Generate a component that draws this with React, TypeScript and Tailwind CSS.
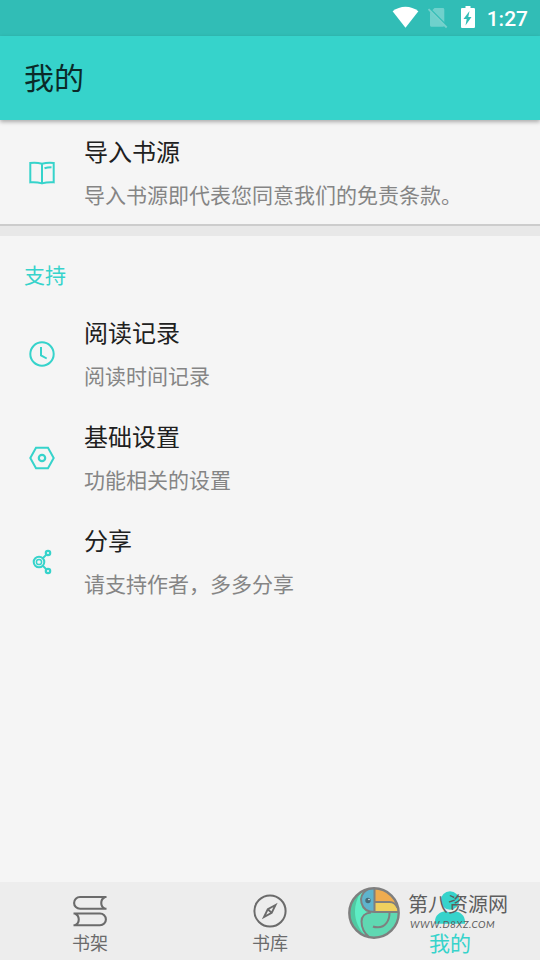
import type { ReactNode } from "react";
import clsx from "clsx";

const BookIcon = () => (
  <svg className="w-9 h-9" viewBox="0 0 36 36" fill="none" stroke="#36d3cb" strokeWidth="2">
    <path d="M18 9.8C14 8.7 10 8.6 6.3 9v19.3c4-.3 8 0 11.7 1.1 3.700-1.100 7.700-1.400 11.700-1.100V9C26 8.600 22 8.700 18 9.800zM18 9.800v19.600" />
    <path d="M20.500 14.200c2-.7 4.500-1 7-1" />
  </svg>
);

const ClockIcon = () => (
  <svg className="w-9 h-9" viewBox="0 0 36 36" fill="none" stroke="#36d3cb" strokeWidth="2">
    <circle cx="18" cy="18" r="11.7" />
    <path d="M17 11v8.300l5.700 3.200" />
  </svg>
);

const SettingIcon = () => (
  <svg className="w-9 h-9" viewBox="0 0 36 36" fill="none" stroke="#36d3cb" strokeWidth="2">
    <path d="M12 7.800h12L29.700 18 24 28.200H12L6.300 18z" />
    <circle cx="18" cy="18" r="3.200" strokeWidth="2.200" />
  </svg>
);

const ShareIcon = () => (
  <svg className="w-9 h-9" viewBox="0 0 36 36" fill="none" stroke="#36d3cb" strokeWidth="2">
    <circle cx="15" cy="18" r="5.300" />
    <circle cx="15" cy="18" r="2.600" strokeWidth="1.500" />
    <circle cx="24" cy="9" r="2.200" strokeWidth="2.200" />
    <circle cx="24" cy="27" r="2.200" strokeWidth="2.200" />
    <path d="M18.800 14.200l3.600-3.600M18.800 21.800l3.600 3.600" />
  </svg>
);

const ShelfIcon = () => (
  <svg className="w-9 h-9" viewBox="0 0 36 36" fill="none" stroke="#6b6b6b" strokeWidth="2.100">
    <path d="M34.500 4H8a5.900 5.900 0 0 0 0 11.800h26.500M33 4c-5 2.500-5 9.300 0 11.800" />
    <path d="M1.500 20.500H28a5.900 5.900 0 0 1 0 11.800H1.500M3 20.500c5 2.500 5 9.300 0 11.800" />
  </svg>
);

const CompassIcon = () => (
  <svg className="w-9 h-9" viewBox="0 0 36 36" fill="none" stroke="#6b6b6b" strokeWidth="2">
    <circle cx="18" cy="18" r="15.600" />
    <path d="M23.500 12l-7.700 4.200-3.800 7.900 7.700-4.200zM15.800 16.200l3.900 3.700" strokeWidth="1.900" />
  </svg>
);

const UserIcon = () => (
  <svg className="w-9 h-9" viewBox="0 0 36 36" fill="#36d3cb">
    <circle cx="18" cy="9.500" r="9.300" />
    <path d="M3 32.800v-2.300C3 24.500 7.500 21 13 20.200a12 12 0 0 0 10 0c5.500.8 10 4.300 10 10.300v2.300z" />
  </svg>
);

const BirdLogo = () => (
  <svg className="w-[52px] h-[52px]" viewBox="0 0 52 52" fill="none" stroke="#7f7f7f" strokeWidth="2">
    <circle cx="26" cy="26" r="25" fill="#5fd8b2" stroke="none" />
    <path d="M17 3C3 9-1 24 4 36c3 8 10 12 18 14-5-4-9-9-9-15 0-5 3-8 6-9-6-6-7-16-2-23z" fill="#5eecc4" stroke="none" />
    <path d="M13 5C2 12-1 25 4 36c3 7 8 11 14 13C6 39 3 20 13 5z" fill="#50c9a2" stroke="none" />
    <path d="M26.500 1.500c11 0 20 7 23 19-3-4-5-5.500-8-5.500h-15z" fill="#efac50" stroke="none" />
    <path d="M26.500 15h15c5 0 8 4 9 10h-24z" fill="#efd05f" stroke="none" />
    <path d="M20 2c-6 4-8 9-6.500 14 1.500 6 6 9 13 9V1.500z" fill="#5eb4cd" stroke="none" />
    <path d="M20 2c-6 4-8 9-6.500 14 1.500 6 6 9 13 9h24M26.500 1.500V25M26.500 15h15c4 0 6.500 2 8 6" />
    <path d="M23 25.500c-6 .5-9.500 4-9.500 9 0 6 3 12 8 16M41.500 26c0 8-4.500 14.300-11.500 14.300-2 0-3.500 0-5-.8" />
    <circle cx="20" cy="13.500" r="2.700" fill="#476b78" stroke="none" />
    <circle cx="21" cy="12.500" r=".8" fill="#dfeef2" stroke="none" />
    <circle cx="26" cy="26" r="24.700" strokeWidth="2.400" />
  </svg>
);

const StatusBar = () => (
  <div className="h-9 bg-[#31bdb6] flex items-center justify-end pr-3">
    <svg className="w-[84px] h-9" viewBox="392 0 84 36" fill="#fff">
      <path d="M405.500 27.800L392.600 11.300c7.500-6 18.300-6 25.800 0z" />
      <path d="M434.500 8h8.300c.9 0 1.500.6 1.500 1.500v15.700c0 .9-.6 1.500-1.500 1.500H431.500c-.9 0-1.500-.6-1.500-1.500V12.500z" opacity=".3" />
      <path d="M429.500 8.200l18.200 18.300" stroke="#31bdb6" strokeWidth="1.500" />
      <path d="M428.500 9.200l18.200 18.300" stroke="#77d1cc" strokeWidth="1.800" />
      <path d="M465.500 6h5v2h3.200c.7 0 1.300.5 1.300 1.200v17.500c0 .7-.6 1.300-1.300 1.300h-11.400c-.7 0-1.300-.6-1.300-1.300V9.200c0-.7.600-1.200 1.300-1.200h3.200z" />
      <path d="M469.500 11l-6 8h3.200l-1.200 6.500 6-8.500h-3.200z" fill="#31bdb6" />
    </svg>
    <span className="ml-[11px] pt-0.5 font-[Roboto] font-medium text-[21px] leading-9 text-white">1:27</span>
  </div>
);

interface ItemProps {
  icon: ReactNode;
  title: string;
  summary: string;
  className?: string;
}

const Item = ({ icon, title, summary, className }: ItemProps) => (
  <div className="h-[104px] px-6 flex items-center gap-6">
    {icon}
    <div className={clsx("h-full", className ?? "pt-3")}>
      <p className="text-2xl leading-9 text-[#202020]">{title}</p>
      <p className="mt-2.5 text-[21px] leading-[30px] text-[#858585]">{summary}</p>
    </div>
  </div>
);

const records: ItemProps[] = [
  { icon: <ClockIcon />, title: "阅读记录", summary: "阅读时间记录" },
  { icon: <SettingIcon />, title: "基础设置", summary: "功能相关的设置" },
  { icon: <ShareIcon />, title: "分享", summary: "请支持作者，多多分享" },
];

const App = () => {
  return (
    <div className="relative w-[540px] h-[960px] flex flex-col overflow-hidden bg-[#f5f5f5] font-['Noto_Sans_CJK_SC',sans-serif]">
      <StatusBar />
      <header className="relative h-[84px] px-6 bg-[#36d3cb] shadow-[0_2px_4px_rgba(0,0,0,0.3)]">
        <h1 className="text-[30px] leading-[80px] text-[#0b2a29]">我的</h1>
      </header>

      <main className="flex-1">
        <Item
          icon={<BookIcon />}
          title="导入书源"
          summary="导入书源即代表您同意我们的免责条款。"
          className="pt-[13px]"
        />
        <div className="h-3 bg-[#e8e8e8] border-t-2 border-[#cccccc]"></div>
        <h2 className="h-[66px] pt-[23px] px-6 text-[21px] leading-[30px] text-[#36d3cb]">支持</h2>
        {records.map((item) => (
          <Item key={item.title} {...item} />
        ))}
      </main>

      <nav className="h-[78px] grid grid-cols-3 bg-[#ededed] text-lg leading-6 text-[#6b6b6b]">
        <div className="flex flex-col items-center pt-[11px]">
          <ShelfIcon />
          <span className="mt-px">书架</span>
        </div>
        <div className="flex flex-col items-center pt-[11px]">
          <CompassIcon />
          <span className="mt-px">书库</span>
        </div>
        <div className="flex flex-col items-center pt-[9px] text-[#36d3cb]">
          <UserIcon />
          <span className="mt-[3px] text-[21px] leading-6">我的</span>
        </div>
      </nav>

      <div className="absolute left-[348px] top-[887px] flex gap-2">
        <BirdLogo />
        <div className="pt-[5px] whitespace-nowrap text-[#5e5e5e]">
          <p className="text-xl leading-6">第八资源网</p>
          <p className="pl-0.5 pt-0.5 text-[10px] leading-3 italic tracking-[0.5px] font-[Lato]">WWW.D8XZ.COM</p>
        </div>
      </div>
    </div>
  );
};

export default App;
